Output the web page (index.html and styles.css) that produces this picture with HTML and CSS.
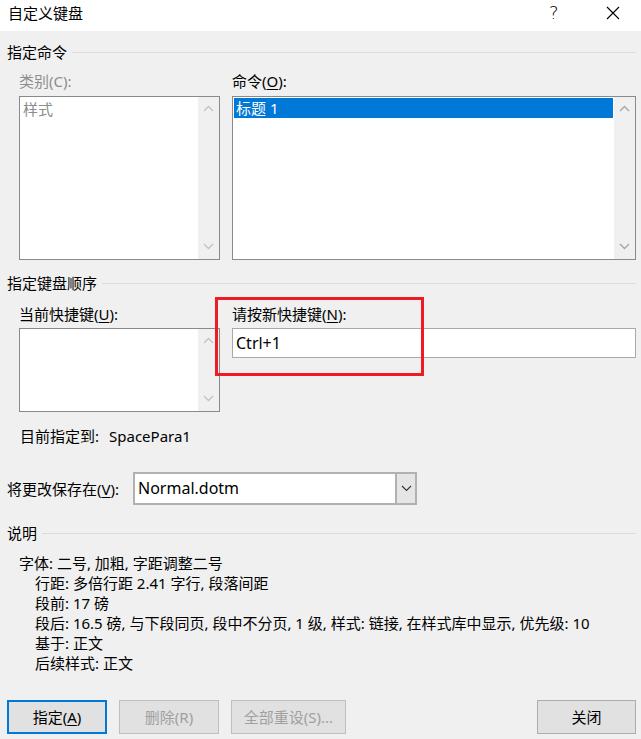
FILE: index.html
```html
<!DOCTYPE html>
<html lang="zh-CN">
<head>
<meta charset="utf-8">
<title>自定义键盘</title>
<link rel="stylesheet" href="styles.css">
</head>
<body>
<div class="titlebar">
  <span class="title">自定义键盘</span>
  <div class="tb-btns">
    <span class="help">?</span>
    <svg class="close" width="14" height="14" viewBox="0 0 14 14"><path d="M1 1 L13 13 M13 1 L1 13" stroke="#000" stroke-width="1.1" fill="none"/></svg>
  </div>
</div>
<div class="main">
  <div class="section-head s1"><span>指定命令</span><i class="rule"></i></div>
  <div class="pair pair1">
    <div class="col left">
      <div class="label gray">类别(C):</div>
      <div class="listbox tall">
        <div class="items"><div class="item gray">样式</div></div>
        <div class="scroll">
          <svg class="chev light" width="11" height="7" viewBox="0 0 11 7"><polyline points="1,6 5.5,1.5 10,6" fill="none" stroke="currentColor" stroke-width="1.4"/></svg>
          <svg class="chev light" width="11" height="7" viewBox="0 0 11 7"><polyline points="1,1 5.5,5.5 10,1" fill="none" stroke="currentColor" stroke-width="1.4"/></svg>
        </div>
      </div>
    </div>
    <div class="col right">
      <div class="label">命令(<u>O</u>):</div>
      <div class="listbox tall">
        <div class="items"><div class="item selected">标题 1</div></div>
        <div class="scroll">
          <svg class="chev" width="11" height="7" viewBox="0 0 11 7"><polyline points="1,6 5.5,1.5 10,6" fill="none" stroke="currentColor" stroke-width="1.4"/></svg>
          <svg class="chev" width="11" height="7" viewBox="0 0 11 7"><polyline points="1,1 5.5,5.5 10,1" fill="none" stroke="currentColor" stroke-width="1.4"/></svg>
        </div>
      </div>
    </div>
  </div>

  <div class="section-head s2"><span>指定键盘顺序</span><i class="rule"></i></div>
  <div class="pair pair2">
    <div class="col left">
      <div class="label lbl2">当前快捷键(<u>U</u>):</div>
      <div class="listbox short">
        <div class="items"></div>
        <div class="scroll">
          <svg class="chev light" width="11" height="7" viewBox="0 0 11 7"><polyline points="1,6 5.5,1.5 10,6" fill="none" stroke="currentColor" stroke-width="1.4"/></svg>
          <svg class="chev light" width="11" height="7" viewBox="0 0 11 7"><polyline points="1,1 5.5,5.5 10,1" fill="none" stroke="currentColor" stroke-width="1.4"/></svg>
        </div>
      </div>
    </div>
    <div class="col right annotated">
      <div class="label lbl2">请按新快捷键(<u>N</u>):</div>
      <div class="input">Ctrl+1</div>
      <div class="redbox"></div>
    </div>
  </div>

  <div class="assigned"><span>目前指定到:</span><span class="val">SpacePara1</span></div>

  <div class="save-row">
    <span class="save-label">将更改保存在(<u>V</u>):</span>
    <div class="combo">
      <span class="combo-text">Normal.dotm</span>
      <span class="combo-btn"><svg width="11" height="7" viewBox="0 0 11 7"><polyline points="1,1 5.5,5.5 10,1" fill="none" stroke="#333" stroke-width="1.1"/></svg></span>
    </div>
  </div>

  <div class="section-head s3"><span>说明</span><i class="rule"></i></div>
  <div class="desc">
    <div>字体: 二号, 加粗, 字距调整二号</div>
    <div class="ind">行距: 多倍行距 2.41 字行, 段落间距</div>
    <div class="ind">段前: 17 磅</div>
    <div class="ind">段后: 16.5 磅, 与下段同页, 段中不分页, 1 级, 样式: 链接, 在样式库中显示, 优先级: 10</div>
    <div class="ind">基于: 正文</div>
    <div class="ind">后续样式: 正文</div>
  </div>

  <div class="buttons">
    <div class="btn primary">指定(<u>A</u>)</div>
    <div class="btn disabled">删除(R)</div>
    <div class="btn disabled wide">全部重设(S)...</div>
    <div class="btn close-btn">关闭</div>
  </div>
</div>
</body>
</html>
```

FILE: styles.css
```css
* { box-sizing: border-box; }
body {
  margin: 0;
  width: 641px;
  height: 739px;
  overflow: hidden;
  background: #f0f0f0;
  font-family: "Noto Sans", "Noto Sans CJK SC", sans-serif;
  font-size: 15px;
  line-height: 20px;
  color: #000;
}
u { text-decoration: underline; text-underline-offset: 2px; }

.titlebar {
  height: 31px;
  background: #fff;
  display: flex;
  align-items: flex-start;
  padding: 3px 0 0 8px;
}
.title { flex: 1; }
.tb-btns { display: flex; align-items: center; height: 20px; }
.help { width: 12px; margin-right: 45px; font-size: 18px; font-family: "DejaVu Sans", sans-serif; font-weight: 300; }
.close { margin-right: 21px; }

.main { padding: 0 5px 0 7px; }

.section-head { display: flex; align-items: center; height: 20px; }
.section-head .rule { flex: 1; height: 1px; background: #dcdcdc; margin-left: 5px; }
.s1 { margin-top: 11px; }
.s2 { margin-top: 13px; }
.s3 { margin-top: 18px; }

.pair { display: flex; gap: 12px; margin-left: 12px; }
.pair1 { margin-top: 9px; }
.pair2 { margin-top: 11px; }
.col.left { width: 201px; }
.col.right { width: 404px; }

.label { height: 20px; margin-bottom: 5px; }
.lbl2 { margin-bottom: 4px; }
.gray { color: #8d8d8d; }

.listbox {
  border: 1px solid #8a8a8a;
  display: flex;
  background: #fff;
}
.listbox.tall { height: 164px; }
.listbox.short { height: 84px; }
.items { flex: 1; padding: 1px; }
.item { height: 20px; padding-left: 2px; }
.item.gray { padding-left: 2px; margin-top: 1px; }
.item.selected { background: #0078d7; color: #fff; }
.scroll {
  width: 21px;
  background: #f0f0f0;
  display: flex;
  flex-direction: column;
  align-items: center;
  justify-content: space-between;
  padding: 8px 0 9px;
}
.chev { color: #a6a6a6; display: block; }
.chev.light { color: #c4c4c4; }

.annotated { position: relative; }
.input {
  height: 30px;
  border: 1px solid #a9a9a9;
  background: #fff;
  padding: 4px 0 0 3px;
  font-size: 16px;
}
.redbox {
  position: absolute;
  left: -17px;
  top: -7px;
  width: 209px;
  height: 79px;
  border: 3px solid #ed1c24;
}

.assigned { margin: 14px 0 0 13px; height: 20px; display: flex; }
.assigned .val { margin-left: 10px; }

.save-row { margin-top: 26px; display: flex; align-items: center; height: 33px; }
.save-label { width: 126px; }
.combo {
  width: 284px;
  height: 33px;
  border: 2px solid #b1b1b1;
  background: #fff;
  display: flex;
}
.combo-text { flex: 1; padding: 4px 0 0 3px; font-size: 16px; }
.combo-btn {
  width: 20px;
  background: #e5e5e5;
  border-left: 2px solid #b1b1b1;
  display: flex;
  align-items: center;
  justify-content: center;
}

.desc { margin-top: 10px; padding-left: 12px; }
.desc .ind { padding-left: 16px; }

.buttons { margin-top: 27px; display: flex; height: 34px; }
.btn {
  height: 34px;
  width: 100px;
  margin-right: 12px;
  border: 1px solid #adadad;
  background: #e1e1e1;
  display: flex;
  align-items: center;
  justify-content: center;
}
.btn.primary { border: 2px solid #0078d7; width: 100px; }
.btn.disabled { border-color: #bfbfbf; color: #a0a0a0; }
.btn.wide { width: 115px; }
.btn.close-btn { margin-left: auto; margin-right: 0; width: 99px; }
```
